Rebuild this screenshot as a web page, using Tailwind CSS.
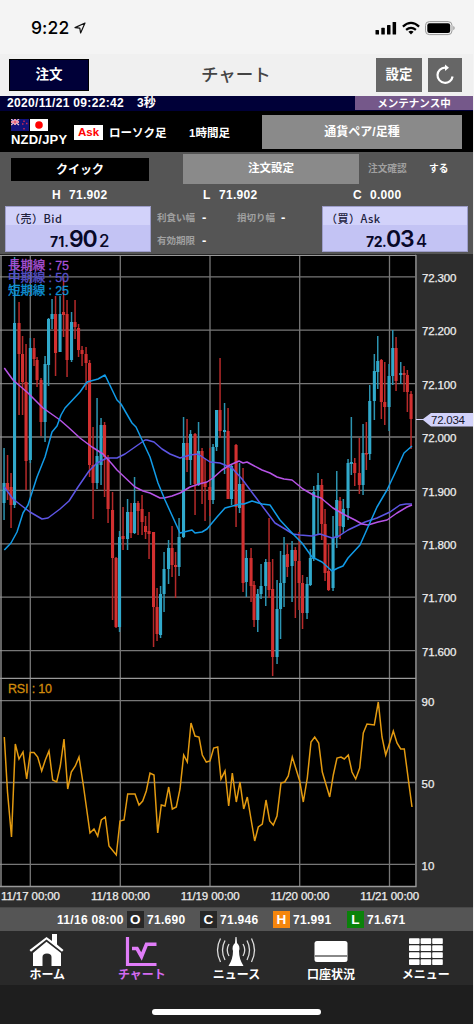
<!DOCTYPE html>
<html lang="ja">
<head>
  <meta charset="UTF-8" />
  <meta name="viewport" content="width=device-width, initial-scale=1.0"/>
  <title>チャート</title>
  <script src="https://cdn.jsdelivr.net/npm/@tailwindcss/browser@4"></script>
</head>
<body class="bg-[#f4f4f4] font-['Liberation_Sans','Noto_Sans_CJK_JP',sans-serif] overflow-hidden">
  <div class="w-[473px] h-[1024px] flex flex-col whitespace-nowrap">

    <!-- Status bar -->
    <div class="h-[54px] shrink-0 flex items-start pt-[18px] pl-[31px] pr-[18px] text-black">
      <span class="font-['Inter',sans-serif] font-medium text-[17.500px] leading-5 tracking-[0.1px]">9:22</span>
      <svg class="w-3 h-3 ml-[5px] mt-1" viewBox="0 0 12 12" fill="none" stroke="#111" stroke-width="1.2" stroke-linejoin="round"><path d="M11 1L1 5.600L5.800 6.200L6.600 11Z"/></svg>
      <svg class="w-[80px] h-[16px] ml-auto mt-[2px]" viewBox="0 0 80 16">
        <g fill="#000">
          <rect x="0.500" y="10" width="3.500" height="4.500" rx=".6"/>
          <rect x="6.300" y="7.800" width="3.500" height="6.700" rx=".6"/>
          <rect x="12" y="5" width="3.500" height="9.500" rx=".6"/>
          <rect x="17.600" y="2" width="3.500" height="12.500" rx=".6"/>
          <path d="M36 14.400L33.400 11.700Q36 9.800 38.600 11.700Z"/>
        </g>
        <g fill="none" stroke="#000" stroke-width="2.200">
          <path d="M27.900 6.600Q36 -0.800 44.100 6.600"/>
          <path d="M31.100 9.900Q36 5.700 40.900 9.900"/>
        </g>
        <rect x="50.500" y="1.600" width="26.500" height="13" rx="3.800" fill="none" stroke="#999"/>
        <rect x="52.300" y="3.300" width="22.900" height="9.600" rx="2.200"/>
        <path d="M78.300 6v4.200q1.400-.6 1.400-2.100t-1.400-2.100" fill="#999"/>
      </svg>
    </div>

    <!-- Header -->
    <div class="h-[42px] shrink-0 bg-[#f0f0f0] flex items-start justify-between pl-[9px] pr-[11px] pt-1 relative">
      <button class="w-20 h-[32px] mt-[1px] bg-[#000038] border border-black text-white text-[13.5px] font-bold">注文</button>
      <h1 class="absolute left-[201px] top-[7px] text-[17.5px] leading-7 text-[#444] font-medium">チャート</h1>
      <div class="flex gap-[6px]">
        <button class="w-[46px] h-[34px] bg-[#666] text-white text-[13.5px] font-bold">設定</button>
        <button class="w-[34px] h-[34px] bg-[#666] flex items-center justify-center">
          <svg class="w-6 h-6" viewBox="0 0 24 24" fill="none" stroke="#fff" stroke-width="2.200"><path d="M12 4.600A7.600 7.600 0 1 0 19.600 13.500"/><path d="M12 1.400L16 4.700L12 8Z" fill="#fff" stroke="none"/></svg>
        </button>
      </div>
    </div>

    <!-- Clock and maintenance -->
    <div class="h-[15px] shrink-0 bg-[#000038] flex text-white font-bold text-[12px] leading-[15px]">
      <span class="w-[129px] pl-[7px] tracking-[0.330px]">2020/11/21 09:22:42</span>
      <span class="pl-[8px]">3秒</span>
      <span class="ml-auto w-[118px] bg-[#75588a] text-center text-[10.500px] leading-[15px] h-[14px]">メンテナンス中</span>
    </div>

    <!-- Currency pair -->
    <div class="h-[41px] shrink-0 bg-black flex items-start text-white font-bold">
      <div class="w-[74px] pl-[11px] pt-[8px]">
        <div class="flex gap-px">
          <svg class="w-[18px] h-3" viewBox="0 0 18 12">
            <rect width="18" height="12" fill="#12127c"/>
            <path d="M0 0L8 6M8 0L0 6" stroke="#e9c5d2" stroke-width="1.200"/>
            <path d="M4 0V6M0 3H8" stroke="#fff" stroke-width="2"/>
            <path d="M4 0V6M0 3H8" stroke="#d6284c"/>
            <path d="M13 1.500v1.500M11 5h1.500M15 4.500h1.500M13 9v1.500" stroke="#c52a55" stroke-width="1.500"/>
          </svg>
          <svg class="w-[18px] h-3" viewBox="0 0 18 12"><rect width="18" height="12" fill="#fff"/><circle cx="9" cy="6" r="3.800" fill="#f00"/></svg>
        </div>
        <div class="text-[13px] leading-4 mt-px tracking-[0.200px]">NZD/JPY</div>
      </div>
      <span class="w-[29px] h-[15px] mt-[14px] bg-white text-[#f00] text-[11.500px] leading-[15px] text-center">Ask</span>
      <span class="w-[80px] pl-[6px] pt-[13px] text-[11.500px] leading-[18px]">ローソク足</span>
      <span class="pl-[6px] pt-[13px] text-[11.500px] leading-[18px]">1時間足</span>
      <button class="ml-auto mr-[11px] mt-[4px] w-[200px] h-[34px] bg-[#8a8a8a] text-[12px] font-bold">通貨ペア/足種</button>
    </div>

    <!-- Order panel -->
    <div class="h-[102px] shrink-0 bg-[#555] text-white font-bold">
      <div class="flex h-[35px] pl-[11px] pt-[2px]">
        <button class="w-[138px] h-[23px] mt-[4px] bg-black text-[12px]">クイック</button>
        <button class="w-[176px] h-[30px] ml-[34px] bg-[#8a8a8a] text-[11.500px]">注文設定</button>
        <span class="ml-[9px] w-[61px] text-[9.700px] leading-[30px] text-[#a0a0a0]">注文確認</span>
        <span class="text-[9.700px] leading-[30px]">する</span>
      </div>
      <div class="flex h-[16px] pl-[52px] text-[12px] leading-[16px] tracking-[0.300px]">
        <span class="w-[17px]">H</span><span class="w-[134px]">71.902</span>
        <span class="w-[16px]">L</span><span class="w-[134px]">71.902</span>
        <span class="w-[17px]">C</span><span>0.000</span>
      </div>
      <div class="flex pl-[5px] pt-[3px]">
        <div class="w-[146px] h-[46px] border border-[#9d9dca] bg-linear-to-b from-[#d2d2fa] from-40% to-[#c3c3f4] to-40% text-[#080828]">
          <div class="h-[18px] pl-[3px] pt-px text-[11px] leading-[20px] font-medium font-['Noto_Sans_CJK_JP',sans-serif] tracking-[0.500px] text-[#20203c]">（売）Bid</div>
          <div class="flex items-baseline pl-[44px] font-['Inter','Liberation_Sans',sans-serif] h-[27px] leading-[29px]">
            <span class="text-[14px] w-[19px]">71.</span><span class="text-[23px] tracking-[-1.200px] font-semibold w-[30px]">90</span><span class="text-[17px] font-medium">2</span>
          </div>
        </div>
        <div class="w-[171px] pl-[6px] pt-[3px] text-[9.500px] leading-[18px] text-[#a0a0a0]">
          <div class="flex h-[23px]"><span class="w-[45px]">利食い幅</span><span class="w-[35px] text-[13px] text-white">-</span><span class="w-[44px]">損切り幅</span><span class="text-[13px] text-white">-</span></div>
          <div class="flex"><span class="w-[45px]">有効期限</span><span class="text-[13px] text-white">-</span></div>
        </div>
        <div class="w-[146px] h-[46px] border border-[#9d9dca] bg-linear-to-b from-[#d2d2fa] from-40% to-[#c3c3f4] to-40% text-[#080828]">
          <div class="h-[18px] pl-[3px] pt-px text-[11px] leading-[20px] font-medium font-['Noto_Sans_CJK_JP',sans-serif] tracking-[0.500px] text-[#20203c]">（買）Ask</div>
          <div class="flex items-baseline pl-[43px] font-['Inter','Liberation_Sans',sans-serif] h-[27px] leading-[29px]">
            <span class="text-[14px] tracking-[-0.500px] w-[20px]">72.</span><span class="text-[23px] tracking-[-1.200px] font-semibold w-[30px]">03</span><span class="text-[17px] font-medium">4</span>
          </div>
        </div>
      </div>
    </div>

    <!-- Chart -->
    <svg id="chart" class="w-[473px] h-[653px] shrink-0 bg-[#2d2d2d]" viewBox="0 254 473 653">
      <rect x="0" y="254" width="415" height="633" fill="#000"/>
      <g id="grid" stroke="#777" stroke-width="1.300"></g>
      <g id="candles"></g>
      <g fill="none" stroke-width="1.500" stroke-linejoin="round">
        <polyline stroke="#5d55e4" points="4.300,487 13,499 22,506 30,512 42,519 48,518 60,509 69,501 78,487 89,471 97,463 107,458 117,458 125,454 135,447 145,440 147,440 154,442 162,449 170,454 180,458 190,455 198,454 210,462 220,463 232,468 242,479 257,499 275,523 285,529 293,534 300,535 312,536 320,534 332,538 339,536 348,530 365,522 377,518 390,512 400,505 406,504 412,504"/>
        <polyline stroke="#b653e6" points="4.300,368 13,380 28,393 43,408 60,420 68,427 80,438 92,447 103,454 112,464 117,470 135,487 143,491 150,493 160,498 164,498 172,496 180,493 190,487 199,484 207,482 213,478 222,470 230,465 239,461 243,463 247,462 262,470 270,473 277,477 284,479 292,480 303,489 315,496 321,498 333,508 345,515 355,520 362,524 368,525 378,522 387,520 397,513 407,507 412,505"/>
        <polyline stroke="#119be8" points="4.300,550 11,543 17,532 23,513 28,505 37,477 45,457 52,432 57,426 61,415 65,408 80,392 87,382 98,379 105,375 117,400 121,404 132,423 136,427 143,442 150,457 158,483 165,500 180,533 192,530 195,533 202,532 207,529 217,517 225,508 240,504 244,504 252,501 262,504 270,505 280,520 293,534 302,543 312,557 322,562 332,571 338,568 343,566 348,558 360,545 368,527 377,507 387,490 395,473 404,453 412,446"/>
        <polyline stroke="#e39a10" stroke-linejoin="miter" points="4.300,737 7.500,792 11.500,837 15.300,744 19,759 23,752 26.700,779 30.300,752.500 34,752.500 37.700,757 41.700,771 45.300,760 49,751 52.700,780 56.700,782 60.300,766 64,739 67.700,789 71.300,772 75.300,766 79,757 83.300,785 90,833 94,829 97.700,836 101.300,820 105.300,817 109,846 116.300,855 120,821 124,820 127.700,794 135,794 139,805 142.700,801 146.300,791 150,773 154,775 157.700,833 161.300,805 165,806 168.700,787 172.300,809 176.300,807 180,789 183.700,755 187.300,762 191,723 195,736 199,737 202.300,755 206.300,762 210,761 213.700,748 217.700,747 221,779 225,771 228.700,806 232.300,773 236.300,802 240,782 243.700,809 247.300,797 254.700,841 258.300,827 262.300,824 266,800 269.700,821 273.300,825 277,816 281,783 284.700,782 288.300,776 292.300,757 299.700,781 303.300,802 307.300,778 311,742 314.700,737 318.700,743 322.300,772 329.700,797 333.300,775 337,758 341,757 344.300,759 348.300,755 352,772 355.700,779 359.700,768 363.300,733 367,724 374.300,725 378.300,702 382,737 385.700,755 389.300,744 393.300,731 397,743 400.700,749 404.300,749 412,807"/>
      </g>
      <g font-size="12.500" stroke-width=".3">
        <text x="8" y="269.500" fill="#a851d6" stroke="#a851d6" textLength="61">長期線 : 75</text>
        <text x="8" y="282" fill="#5650c8" stroke="#5650c8" textLength="61">中期線 : 50</text>
        <text x="8" y="294.500" fill="#0f92d6" stroke="#0f92d6" textLength="61">短期線 : 25</text>
        <text x="8" y="693" fill="#d18b0c" stroke="#d18b0c" textLength="44">RSI : 10</text>
      </g>
      <g fill="#eee" stroke="#eee" stroke-width=".25" font-size="11.500" id="labels"></g>
      <path d="M416 419H423L431 413H473V426.500H431L423 420H416Z" fill="#d2d2fa"/>
      <text x="431" y="424" font-size="11.500" fill="#15152a" textLength="34">72.034</text>
    </svg>

    <!-- OHLC bar -->
    <div class="h-[24px] shrink-0 bg-[#555] border-t border-[#484848] flex items-center pl-[57px] text-white font-bold text-[12px] tracking-[0.300px]">
      <span class="w-[70px]">11/16 08:00</span>
      <span class="w-[17px] h-[17px] bg-[#272727] text-center text-[13.500px] leading-[17px]">O</span><span class="w-[56px] pl-[3px]">71.690</span>
      <span class="w-[17px] h-[17px] bg-[#272727] text-center text-[13.500px] leading-[17px]">C</span><span class="w-[56px] pl-[3px]">71.946</span>
      <span class="w-[17px] h-[17px] bg-[#f5860d] text-center text-[13.500px] leading-[17px]">H</span><span class="w-[57px] pl-[3px]">71.991</span>
      <span class="w-[17px] h-[17px] bg-[#0a820a] text-center text-[13.500px] leading-[17px]">L</span><span class="pl-[3px]">71.671</span>
    </div>

    <!-- Tab bar -->
    <div class="h-[54px] shrink-0 bg-[#292929] grid grid-cols-5 text-white font-bold text-[12px]">
      <div class="flex flex-col items-center">
        <svg class="w-9 h-[36px]" viewBox="0 0 36 36" fill="#fff"><path d="M17.500 6L23 10V3H28V13.500L34.500 19L33 20.700L17.500 8.500L2 20.700L0.500 19Z"/><path d="M17.500 10.800L32 22V35H22.500V26Q22.500 22.500 18 22.500T13.500 26V35H4V22Z"/></svg>
        <span class="leading-[17px]">ホーム</span>
      </div>
      <div class="flex flex-col items-center text-[#d36af0]">
        <svg class="w-9 h-[36px]" viewBox="0 0 36 36" fill="none" stroke="#e07df8"><path d="M3.500 6V33.500H32.500" stroke-width="3.200"/><path d="M8 17.500H13L17.500 25.500L22.500 13.200H32.500" stroke-width="3.600"/></svg>
        <span class="leading-[17px]">チャート</span>
      </div>
      <div class="flex flex-col items-center">
        <svg class="w-10 h-[36px]" viewBox="0 0 40 36" fill="none" stroke="#ddd" stroke-width="1.300"><path d="M19.500 6H20.500L21 12Q24.500 15 23 20Q23 28 27.500 35H12.500Q17 28 17 20Q15.500 15 19 12Z" fill="#fff" stroke="none"/><path d="M13 13Q9.500 19 13 25M9 9.500Q4 19 9 29M4.500 7.500Q-1.500 19 4.500 31M27 13Q30.500 19 27 25M31 9.500Q36 19 31 29M35.500 7.500Q41.500 19 35.500 31"/></svg>
        <span class="leading-[17px]">ニュース</span>
      </div>
      <div class="flex flex-col items-center">
        <svg class="w-9 h-[36px]" viewBox="0 0 36 36"><rect x="1.500" y="10" width="33" height="21" rx="2.500" fill="#fff"/><path d="M1.500 25H34.500" stroke="#888" stroke-width="1.800"/></svg>
        <span class="leading-[17px]">口座状況</span>
      </div>
      <div class="flex flex-col items-center">
        <svg class="w-9 h-[36px]" viewBox="0 0 36 36" fill="#fff" id="menuIcon"></svg>
        <span class="leading-[17px]">メニュー</span>
      </div>
    </div>

    <div class="h-[39px] shrink-0 bg-[#1e1e1e] flex justify-center pt-[24px]">
      <div class="w-[169px] h-[6px] rounded-full bg-white"></div>
    </div>
  </div>

  <script>
    // x, high, low, body top, body bottom, 1 = up / 0 = down
    const candles = [
      [4,448,520,483,503,1],[7.5,455,500,483,490,0],[11,473,528,487,505,0],[14.5,257,508,323,505,1],
      [19,302,415,323,354,0],[22.5,336,415,354,382,0],[26,344,490,382,461,0],[30.3,338,463,348,460,1],
      [34,338,366,348,359,0],[37,357,387,360,380,0],[41,378,436,380,422,0],[45,356,442,364,422,1],
      [48.5,318,386,319,365,1],[52,299,329,314,319,1],[55.5,296,376,314,353,0],[60,296,352,314,352,1],
      [63.5,277,337,312,315,0],[67,300,377,314,360,0],[71.5,312,362,322,360,1],[75,300,339,322,327,0],
      [78.5,324,357,328,350,0],[82,346,366,350,354,0],[86,347,390,354,363,0],[89.5,360,477,363,465,0],
      [93,427,519,465,483,0],[97,398,489,456,483,1],[101,418,485,425,465,1],[104.5,422,497,425,457,0],
      [108,455,523,458,509,0],[112.5,492,620,510,558,0],[116,557,628,558,627,0],[119.5,531,632,537,627,1],
      [123,507,550,536,539,0],[127.5,499,550,512,539,1],[131,503,538,512,533,0],[134.5,477,534,503,533,1],
      [138,501,535,503,511,0],[142,495,535,509,522,0],[145.5,516,539,526,532,0],[149,512,559,531,534,0],
      [153.5,532,647,532,607,0],[157,588,641,607,634,0],[160.5,586,638,594,635,1],[164,552,612,569,594,1],
      [168.5,540,584,548,569,1],[172,526,577,548,565,0],[175.5,552,598,565,567,0],[179,518,576,537,567,1],
      [183.5,417,538,443,537,1],[187,419,472,443,460,0],[190.5,430,485,434,460,1],[195,433,515,434,484,0],
      [198.5,422,486,451,485,1],[202,448,504,451,483,0],[205,459,521,483,487,0],[209.8,448,516,487,500,0],
      [213,444,504,447,500,1],[216.5,410,451,410,447,1],[220,358,438,410,431,0],[224.5,403,474,430,432,1],
      [228,408,499,431,499,0],[231.5,465,505,466,499,1],[236,444,527,445,507,0],[239.5,463,513,484,508,1],
      [243,468,592,484,583,0],[246.3,550,597,558,582,1],[251,548,602,558,586,0],[254,581,627,585,620,0],
      [257.7,589,632,594,620,1],[261,564,599,586,594,1],[265.7,559,606,562,586,1],[269,518,598,562,590,0],
      [272.6,559,676,589,657,0],[277,580,664,609,657,1],[280.5,551,639,583,609,1],[284,537,607,555,583,1],
      [287.3,544,577,554,567,0],[292,541,602,550,566,1],[295.3,547,618,550,561,0],[299,532,610,561,583,0],
      [302.5,575,629,583,613,0],[307,577,619,584,613,1],[310.3,549,586,558,585,1],[313.7,486,561,492,559,1],
      [318,473,534,485,490,1],[321.7,479,540,485,524,0],[325,509,581,524,573,0],[328.5,544,591,571,590,0],
      [333,516,591,538,588,1],[336.7,471,548,500,538,1],[340,497,539,501,526,0],[343.3,499,533,509,527,1],
      [348,459,520,463,508,1],[351.3,417,475,462,464,1],[354.7,458,486,463,473,0],[359.3,438,494,473,485,0],
      [363,424,495,453,485,1],[366.3,422,470,453,454,0],[369.7,385,460,401,454,1],[374.3,354,420,371,401,1],
      [377.7,336,389,361,372,1],[381.3,359,419,360,402,0],[384.7,362,425,402,407,0],[389,364,431,376,407,1],
      [392.7,330,385,348,376,1],[396,337,391,348,381,0],[400.7,362,384,373,375,1],[404,366,392,373,375,0],
      [407.3,370,412,375,392,0],[411,391,449,394,419,0]
    ];

    const NS = 'http://www.w3.org/2000/svg';
    function add(parentId, tag, attrs, text) {
      const el = document.createElementNS(NS, tag);
      for (const k in attrs) el.setAttribute(k, attrs[k]);
      if (text) el.textContent = text;
      document.getElementById(parentId).appendChild(el);
    }

    const days = [['11/17', 30.3], ['11/18', 120.3], ['11/19', 210], ['11/20', 299.7], ['11/21', 389.5]];
    days.forEach(([d, x]) => {
      add('grid', 'path', { d: `M${x} 255V887` });
      add('labels', 'text', { x: x - 29.3, y: 900, textLength: 59 }, d + ' 00:00');
    });

    const prices = ['72.300', '72.200', '72.100', '72.000', '71.900', '71.800', '71.700', '71.600'];
    prices.forEach((p, i) => {
      const y = 276.8 + i * 53.4;
      add('grid', 'path', { d: `M0 ${y}H415` });
      add('labels', 'text', { x: 422, y: y + 5.2, textLength: 34.5 }, p);
    });

    [['90', 700.7], ['50', 782.5], ['10', 864.3]].forEach(([v, y]) => {
      add('grid', 'path', { d: `M0 ${y}H415` });
      add('labels', 'text', { x: 421.5, y: y + 5.5 }, v);
    });

    // pane borders
    add('grid', 'path', { d: 'M0 255.300H416M0 678.300H416M0 886.500H416.500M416 255V887M1 255V887', stroke: '#999' });

    candles.forEach(([x, h, l, t, b, up]) => {
      add('candles', 'rect', { x: x - 0.7, y: h, width: 1.5, height: l - h, fill: up ? '#2c93b0' : '#b52a2a' });
      add('candles', 'rect', { x: x - 1.5, y: t, width: 3.1, height: Math.max(1.5, b - t), fill: up ? '#31a9cb' : '#d23030' });
    });

    for (let r = 0; r < 4; r++) {
      for (let c = 0; c < 3; c++) {
        add('menuIcon', 'rect', { x: 1 + c * 11.6, y: 7.3 + r * 7, width: 10.6, height: 5.8, rx: 0.8 });
      }
    }
  </script>
</body>
</html>
